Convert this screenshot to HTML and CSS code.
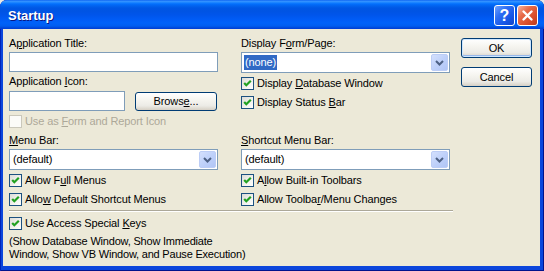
FILE: index.html
```html
<!DOCTYPE html>
<html lang="en">
	<head>
		<meta charset="utf-8"/>
		<title>Startup</title>
		<link rel="stylesheet" href="styles.css">
	</head>
	<body>

		<div class="window">

			<div class="titlebar">
				<span class="title">Startup</span>
				<div class="capButtons">
					<div class="capBtn help">?</div>
					<div class="capBtn close">
						<svg width="19" height="19" viewBox="0 0 19 19"><path d="M5.5 5.5 L13.5 13.5 M13.5 5.5 L5.5 13.5" stroke="#fff" stroke-width="2.4" stroke-linecap="round" fill="none"/></svg>
					</div>
				</div>
			</div>

			<div class="client">
				<div class="main">
					<div class="columns">

						<!-- top left -->
						<div class="group">
							<div class="label">A<u>p</u>plication Title:</div>
							<div class="textbox full"></div>
							<div class="label spaced">Application <u>I</u>con:</div>
							<div class="iconRow">
								<div class="textbox short"></div>
								<div class="btn browse">Brows<u>e</u>...</div>
							</div>
							<div class="check disabled first">
								<span class="box"></span>
								<span>Use as <u>F</u>orm and Report Icon</span>
							</div>
						</div>

						<!-- top right -->
						<div class="group">
							<div class="label">Display F<u>o</u>rm/Page:</div>
							<div class="combo">
								<span class="value selected">(none)</span>
								<span class="drop"><svg width="15" height="15" viewBox="0 0 15 15"><polyline points="4,6 7.5,9.5 11,6" stroke="#4d6185" stroke-width="2" fill="none"/></svg></span>
							</div>
							<div class="check first">
								<span class="box"><svg width="11" height="11" viewBox="0 0 11 11"><polyline points="2.2,5 4.3,7.2 8.8,2.7" stroke="#21a121" stroke-width="2.2" fill="none"/></svg></span>
								<span>Display <u>D</u>atabase Window</span>
							</div>
							<div class="check">
								<span class="box"><svg width="11" height="11" viewBox="0 0 11 11"><polyline points="2.2,5 4.3,7.2 8.8,2.7" stroke="#21a121" stroke-width="2.2" fill="none"/></svg></span>
								<span>Display Status <u>B</u>ar</span>
							</div>
						</div>

						<!-- menu bar -->
						<div class="group">
							<div class="label"><u>M</u>enu Bar:</div>
							<div class="combo">
								<span class="value">(default)</span>
								<span class="drop"><svg width="15" height="15" viewBox="0 0 15 15"><polyline points="4,6 7.5,9.5 11,6" stroke="#4d6185" stroke-width="2" fill="none"/></svg></span>
							</div>
							<div class="check first">
								<span class="box"><svg width="11" height="11" viewBox="0 0 11 11"><polyline points="2.2,5 4.3,7.2 8.8,2.7" stroke="#21a121" stroke-width="2.2" fill="none"/></svg></span>
								<span>Allow F<u>u</u>ll Menus</span>
							</div>
							<div class="check">
								<span class="box"><svg width="11" height="11" viewBox="0 0 11 11"><polyline points="2.2,5 4.3,7.2 8.8,2.7" stroke="#21a121" stroke-width="2.2" fill="none"/></svg></span>
								<span>Allo<u>w</u> Default Shortcut Menus</span>
							</div>
						</div>

						<!-- shortcut menu bar -->
						<div class="group">
							<div class="label"><u>S</u>hortcut Menu Bar:</div>
							<div class="combo">
								<span class="value">(default)</span>
								<span class="drop"><svg width="15" height="15" viewBox="0 0 15 15"><polyline points="4,6 7.5,9.5 11,6" stroke="#4d6185" stroke-width="2" fill="none"/></svg></span>
							</div>
							<div class="check first">
								<span class="box"><svg width="11" height="11" viewBox="0 0 11 11"><polyline points="2.2,5 4.3,7.2 8.8,2.7" stroke="#21a121" stroke-width="2.2" fill="none"/></svg></span>
								<span>A<u>l</u>low Built-in Toolbars</span>
							</div>
							<div class="check">
								<span class="box"><svg width="11" height="11" viewBox="0 0 11 11"><polyline points="2.2,5 4.3,7.2 8.8,2.7" stroke="#21a121" stroke-width="2.2" fill="none"/></svg></span>
								<span>Allow Toolba<u>r</u>/Menu Changes</span>
							</div>
						</div>

					</div>

					<div class="separator"></div>

					<div class="check keys">
						<span class="box"><svg width="11" height="11" viewBox="0 0 11 11"><polyline points="2.2,5 4.3,7.2 8.8,2.7" stroke="#21a121" stroke-width="2.2" fill="none"/></svg></span>
						<span>Use Access Special <u>K</u>eys</span>
					</div>
					<p class="note">(Show Database Window, Show Immediate<br/>Window, Show VB Window, and Pause Execution)</p>
				</div>

				<div class="buttons">
					<div class="btn default">OK</div>
					<div class="btn">Cancel</div>
				</div>
			</div>

		</div>

	</body>
</html>
```

FILE: styles.css
```css
body, html {
	margin: 0px;
	background-color: #e9e9e4;
}

body {
	font-family: "Liberation Sans", Arial, sans-serif;
	font-size: 11px;
	letter-spacing: -0.12px;
	color: #000;
}

u {
	text-decoration: underline;
	text-underline-offset: 1px;
}

.window {
	width: 544px;
	height: 271px;
	display: flex;
	flex-direction: column;
	background-color: #0b46dc;
	border-radius: 7px 7px 0 0;
	box-shadow: inset 1px 0 #0024b8, inset -1px 0 #00138c, inset 0 -1px #00138c;
}

/* ============ title bar ============ */
.titlebar {
	height: 29px;
	flex: none;
	display: flex;
	align-items: center;
	padding: 0 6px 0 8px;
	border-radius: 7px 7px 0 0;
	background: linear-gradient(to bottom, #0058ee 0px, #3a93ff 1px, #288eff 2px, #127dff 3px, #036ffc 4px, #0262ee 6px, #0057e5 8px, #0054e3 11px, #0055eb 15px, #005bf5 19px, #0062f9 23px, #005df0 26px, #0046d8 28px, #003dd7 29px);
}

.title {
	color: #fff;
	font-weight: bold;
	font-size: 13px;
	letter-spacing: 0;
	text-shadow: 1px 1px #0a1883;
	margin-top: 1px;
}

.capButtons {
	margin-left: auto;
	display: flex;
	gap: 2px;
	margin-top: 2px;
}

.capBtn {
	width: 21px;
	height: 21px;
	box-sizing: border-box;
	border: 1px solid #fff;
	border-radius: 3px;
	display: flex;
	align-items: center;
	justify-content: center;
}

.help {
	background: linear-gradient(135deg, #6fa2ff 0%, #2f6ff4 35%, #1656e6 70%, #1444c6 100%);
	color: #fff;
	font-weight: bold;
	font-size: 16px;
	letter-spacing: 0;
}

.close {
	background: linear-gradient(135deg, #f6b49f 0%, #e76a48 35%, #d94d2a 70%, #b93a1c 100%);
}

/* ============ client area ============ */
.client {
	flex: 1;
	margin: 0 4px 5px 3px;
	background-color: #ece9d8;
	display: flex;
	padding: 8px 8px 0 6px;
}

.main {
	width: 441px;
}

.columns {
	display: grid;
	grid-template-columns: 209px 209px;
	column-gap: 23px;
	row-gap: 6px;
}

.group {
	display: flex;
	flex-direction: column;
}

.label {
	line-height: 13px;
	height: 13px;
	white-space: nowrap;
}
.label.spaced {
	margin-top: 3px;
}

.textbox {
	box-sizing: border-box;
	height: 20px;
	border: 1px solid #7f9db9;
	background-color: #fff;
	margin-top: 2px;
}
.textbox.full {
	width: 209px;
}
.textbox.short {
	width: 116px;
	margin-top: 0;
}

.iconRow {
	display: flex;
	align-items: center;
	gap: 10px;
	margin-top: 3px;
}

.btn {
	box-sizing: border-box;
	height: 20px;
	border: 1px solid #003c74;
	border-radius: 3px;
	background: linear-gradient(to bottom, #ffffff 0%, #f6f5f0 40%, #ecebe6 75%, #d6d0c5 100%);
	display: flex;
	align-items: center;
	justify-content: center;
	line-height: 13px;
}
.btn.browse {
	width: 82px;
	height: 19px;
}
.btn.default {
	box-shadow: inset 0 0 0 1px #cee7ff, inset 0 -1px 0 1px #98b8ea;
}

.combo {
	box-sizing: border-box;
	height: 21px;
	border: 1px solid #7f9db9;
	background-color: #fff;
	margin-top: 2px;
	display: flex;
	align-items: center;
	padding-left: 2px;
}

.value {
	padding: 1px 1px;
	line-height: 13px;
}
.value.selected {
	background-color: #316ac5;
	color: #fff;
}

.drop {
	margin-left: auto;
	margin-right: 1px;
	width: 17px;
	height: 17px;
	box-sizing: border-box;
	border: 1px solid #bccdf6;
	border-radius: 2px;
	background: linear-gradient(135deg, #d4e0fd 0%, #bfd1fa 50%, #b0c5f6 100%);
	display: flex;
	align-items: center;
	justify-content: center;
}

/* ============ checkboxes ============ */
.check {
	display: flex;
	align-items: center;
	gap: 3px;
	height: 13px;
	line-height: 13px;
	margin-top: 6px;
	white-space: nowrap;
}
.check.first {
	margin-top: 4px;
}

.box {
	width: 13px;
	height: 13px;
	box-sizing: border-box;
	border: 1px solid #1c5180;
	background: linear-gradient(135deg, #dcdcd7 0%, #f3f3ef 60%, #ffffff 100%);
	display: flex;
	align-items: center;
	justify-content: center;
	flex: none;
}

.check.disabled {
	color: #aca899;
}
.check.disabled .box {
	border-color: #cac8bb;
	background: #fbfbf8;
}

.separator {
	margin-top: 4px;
	margin-right: -3px;
	border-top: 1px solid #aca899;
	border-bottom: 1px solid #fff;
}

.check.keys {
	margin-top: 5px;
}

.note {
	margin: 5px 0 0 0;
	line-height: 13px;
	letter-spacing: -0.2px;
}

/* ============ OK / Cancel ============ */
.buttons {
	margin-left: 11px;
	margin-top: 1px;
	display: flex;
	flex-direction: column;
	gap: 9px;
	width: 71px;
}
```
